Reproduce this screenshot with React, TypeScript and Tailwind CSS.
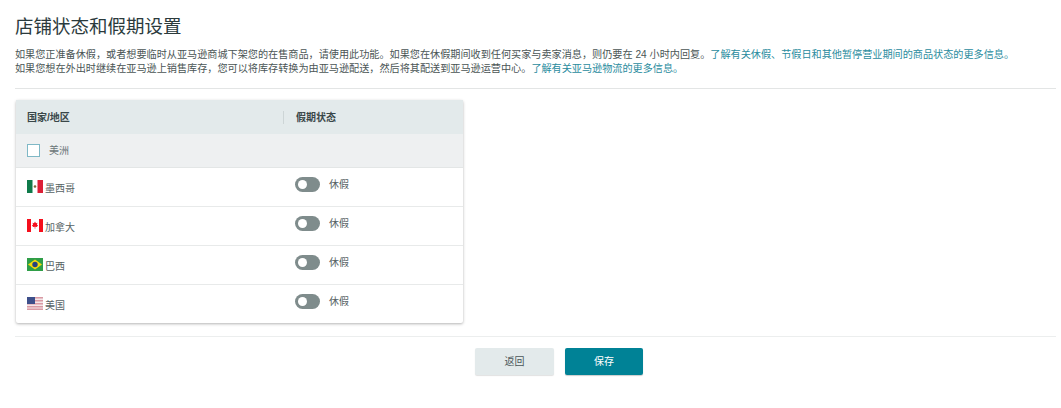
import React from 'react';

const cjk = { fontFamily: '"Liberation Sans", "Noto Sans CJK SC", sans-serif' };

const Mexico = () => (
  <svg width="16" height="13" viewBox="0 0 16 13" className="shrink-0">
    <rect width="16" height="13" fill="#fff" />
    <rect width="5.5" height="13" fill="#0f7a4a" />
    <rect x="10.5" width="5.5" height="13" fill="#dc1f36" />
    <circle cx="8" cy="6.5" r="1.3" fill="#7b6a3a" />
  </svg>
);

const Canada = () => (
  <svg width="16" height="13" viewBox="0 0 16 13" className="shrink-0">
    <rect width="16" height="13" fill="#fff" />
    <rect width="4" height="13" fill="#f50f1c" />
    <rect x="12" width="4" height="13" fill="#f50f1c" />
    <path d="M8 2.4 9 4.2 10.4 3.8 10 6 11.2 6.2 9.8 8 8.3 7.8 8.3 9.8 7.7 9.8 7.7 7.8 6.2 8 4.8 6.2 6 6 5.6 3.8 7 4.2Z" fill="#f50f1c" />
  </svg>
);

const Brazil = () => (
  <svg width="16" height="13" viewBox="0 0 16 13" className="shrink-0">
    <rect width="16" height="13" fill="#2f9e48" />
    <path d="M8 1.4 15 6.5 8 11.6 1 6.5Z" fill="#f5d90a" />
    <circle cx="8" cy="6.5" r="2.7" fill="#26437f" />
  </svg>
);

const Usa = () => (
  <svg width="16" height="13" viewBox="0 0 16 13" className="shrink-0">
    <rect width="16" height="13" fill="#f4e6e8" />
    <rect y="0" width="16" height="1.5" fill="#d99aa4" />
    <rect y="3" width="16" height="1.5" fill="#d99aa4" />
    <rect y="6" width="16" height="1.5" fill="#d99aa4" />
    <rect y="9" width="16" height="1.5" fill="#d99aa4" />
    <rect y="11.5" width="16" height="1.5" fill="#d99aa4" />
    <rect width="8" height="7" fill="#3d4f8a" />
  </svg>
);

const rows = [
  { name: '墨西哥', flag: <Mexico /> },
  { name: '加拿大', flag: <Canada /> },
  { name: '巴西', flag: <Brazil /> },
  { name: '美国', flag: <Usa /> },
];

const Toggle = () => (
  <div className="flex h-[15px] w-[25px] items-center rounded-full bg-[#7f8c8c] pl-[3px]">
    <div className="h-[9px] w-[9px] rounded-full bg-white" />
  </div>
);

export default function App() {
  return (
    <div className="h-[408px] w-[1061px] overflow-hidden bg-white pl-[15px] pr-[5px] pt-[15px]" style={cjk}>
      <h1 className="text-[18.5px] leading-[24px] text-[#2b3a3c]">店铺状态和假期设置</h1>

      <div className="mt-[9px] text-[10.15px] text-[#4a5555]">
        <p className="h-[14px] whitespace-nowrap leading-[14px]">
          如果您正准备休假，或者想要临时从亚马逊商城下架您的在售商品，请使用此功能。如果您在休假期间收到任何买家与卖家消息，则仍要在 24 小时内回复。
          <span className="text-[#2a8c9e]">了解有关休假、节假日和其他暂停营业期间的商品状态的更多信息。</span>
        </p>
        <p className="h-[14px] whitespace-nowrap leading-[14px]">
          如果您想在外出时继续在亚马逊上销售库存，您可以将库存转换为由亚马逊配送，然后将其配送到亚马逊运营中心。
          <span className="text-[#2a8c9e]">了解有关亚马逊物流的更多信息。</span>
        </p>
      </div>

      <div className="mt-[12px] h-px bg-[#e3e5e5]" />

      <div className="ml-px mt-[11px] w-[447px] rounded-[2px] bg-white shadow-[0_1px_3px_rgba(0,0,0,0.3)]">
        <div className="flex h-[34px] items-center bg-[#e3eaeb] text-[10px] font-bold text-[#3a4749]">
          <div className="w-[267px] pl-[11px]">国家/地区</div>
          <div className="h-[13px] w-px bg-[#cdd5d6]" />
          <div className="pl-3">假期状态</div>
        </div>
        <div className="flex h-[34px] items-center border-b border-[#e3e6e6] bg-[#eef0f1] pl-[11px] text-[10px] text-[#6b7678]">
          <div className="h-[13px] w-[13px] border border-[#7fb8c6] bg-white" />
          <span className="mb-[1px] ml-[9px]">美洲</span>
        </div>
        {rows.map((row, index) => (
          <div
            key={row.name}
            className={`flex items-center text-[10px] text-[#566264] ${index < rows.length - 1 ? 'h-[39px] border-b border-[#e8eaea]' : 'h-[38px]'}`}
          >
            <div className="flex w-[279px] items-center pl-[11px]">
              <div className="mb-[2px]">{row.flag}</div>
              <span className="ml-[2px] mt-[3px]">{row.name}</span>
            </div>
            <div className="mb-[6px] flex items-center">
              <Toggle />
              <span className="ml-[9px]">休假</span>
            </div>
          </div>
        ))}
      </div>

      <div className="mt-[13px] h-px bg-[#eceeee]" />

      <div className="mt-[11px] flex pl-[460px] text-[10px]">
        <button className="h-[27px] w-[79px] rounded-[2px] bg-[#e3eaeb] text-[#4a5658] shadow-[0_1px_1px_rgba(0,0,0,0.12)]">返回</button>
        <button className="ml-[11px] h-[27px] w-[78px] rounded-[2px] bg-[#008296] text-white shadow-[0_1px_1px_rgba(0,0,0,0.2)]">保存</button>
      </div>
    </div>
  );
}
